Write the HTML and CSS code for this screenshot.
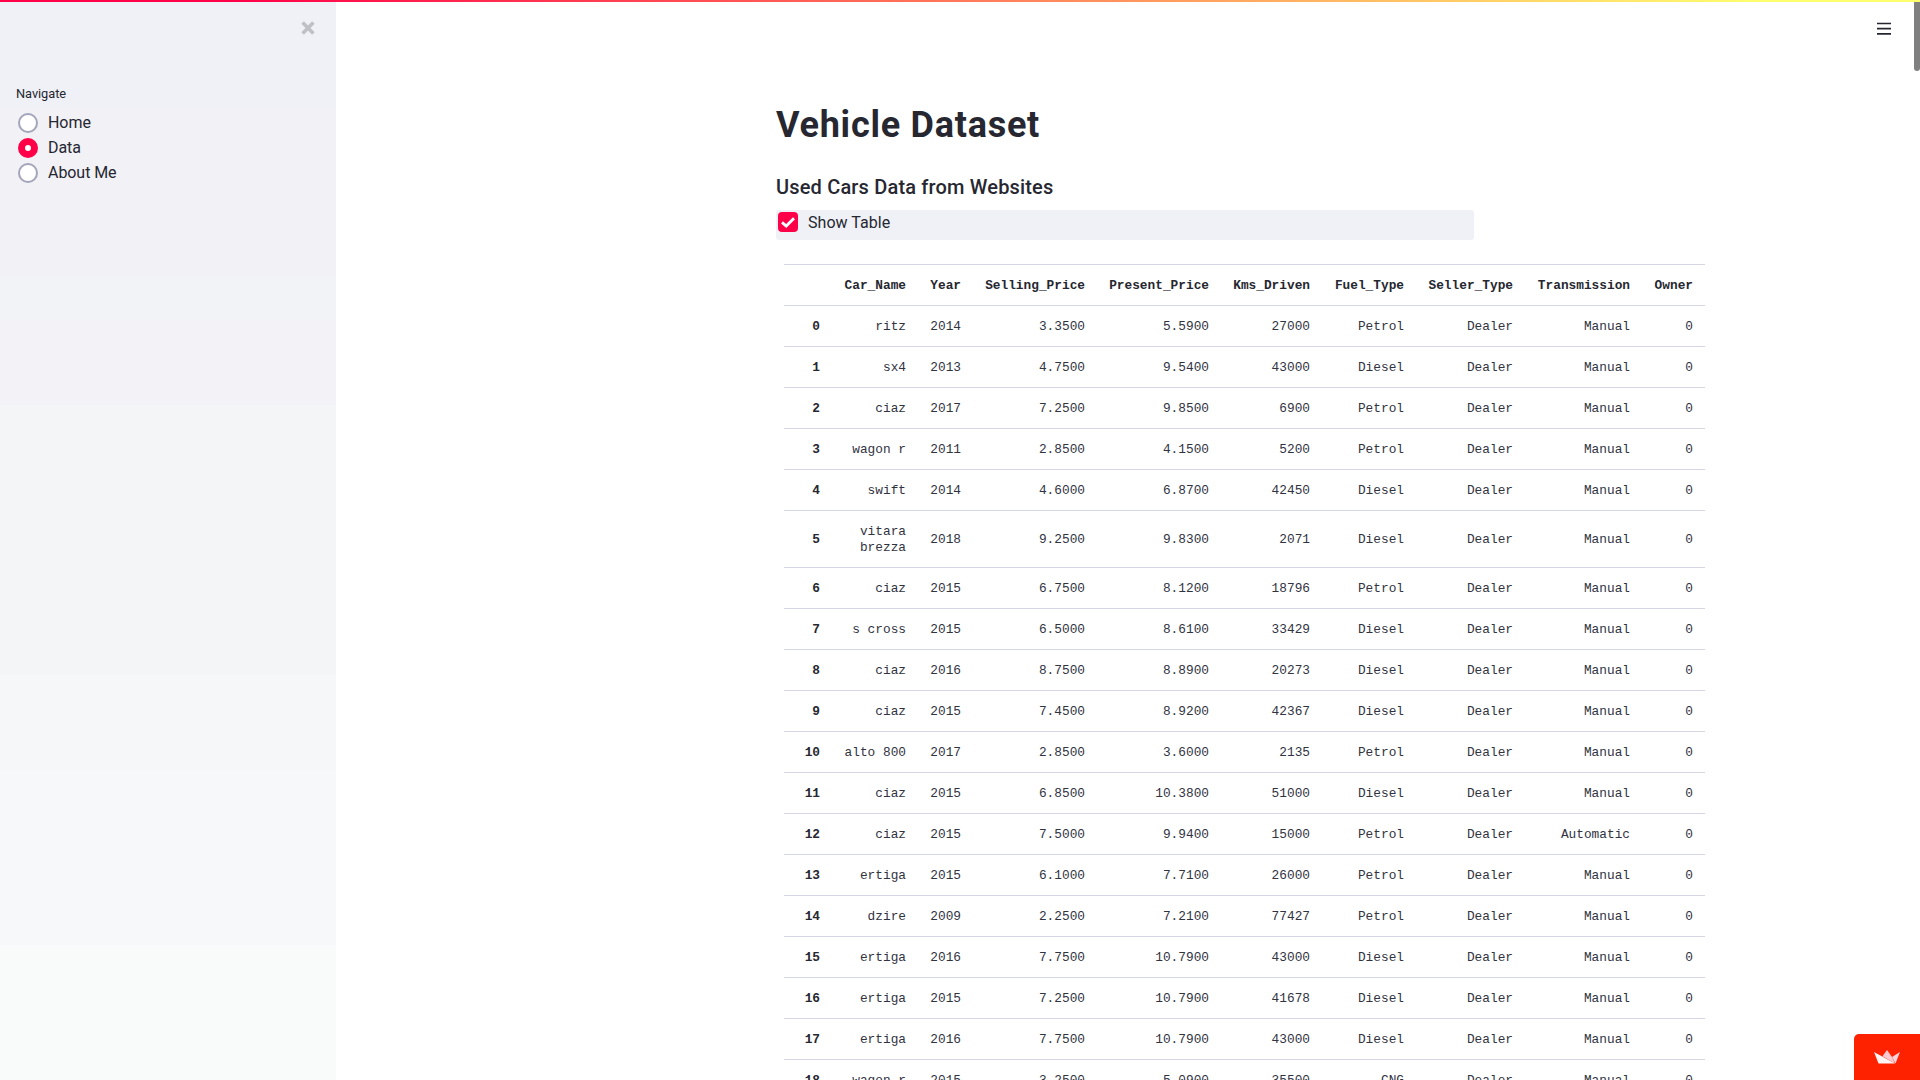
FILE: index.html
```html
<!DOCTYPE html>
<html lang="en">
<head>
<meta charset="utf-8">
<title>Vehicle Dataset</title>
<link rel="stylesheet" href="styles.css">
</head>
<body>
<div class="decoration"></div>
<div class="app">
  <aside class="sidebar">
    <div class="sidebar-top">
      <svg class="close" viewBox="0 0 14 14"><path d="M1.6 1.6 12.4 12.4M12.4 1.6 1.6 12.4"/></svg>
    </div>
    <div class="nav">
      <div class="nav-label">Navigate</div>
      <div class="option"><span class="radio"></span><span class="option-text">Home</span></div>
      <div class="option"><span class="radio selected"></span><span class="option-text">Data</span></div>
      <div class="option"><span class="radio"></span><span class="option-text">About Me</span></div>
    </div>
  </aside>
  <main class="main">
    <div class="block">
      <h1>Vehicle Dataset</h1>
      <h3>Used Cars Data from Websites</h3>
      <div class="checkbox"><span class="box"><svg viewBox="0 0 20 20"><path d="M4 10.4 8.2 14.1 16 6.2"/></svg></span><span class="check-text">Show Table</span></div>
      <table class="table">
        <colgroup><col class="c0"><col class="c1"><col class="c2"><col class="c3"><col class="c4"><col class="c5"><col class="c6"><col class="c7"><col class="c8"><col class="c9"></colgroup>
        <thead><tr><th></th><th>Car_Name</th><th>Year</th><th>Selling_Price</th><th>Present_Price</th><th>Kms_Driven</th><th>Fuel_Type</th><th>Seller_Type</th><th>Transmission</th><th>Owner</th></tr></thead>
        <tbody id="rows"></tbody>
      </table>
    </div>
  </main>
</div>
<svg class="menu" viewBox="0 0 14 13"><path d="M0 1.5H14M0 6.7H14M0 11.8H14"/></svg>
<div class="scrollbar"></div>
<div class="badge"><svg viewBox="0 0 26 14"><path class="p2" d="M8.5 6.3 13 0 18 7 21 13.5Z"/><path class="p1" d="M0 2 21 13.5H4.5Z"/><path class="p3" d="M26 2 21.5 13.5 18 7Z"/></svg></div>
<script src="table.js"></script>
</body>
</html>
```
FILE: styles.css
```css
* { box-sizing: border-box; }
html, body { margin: 0; height: 100%; overflow: hidden; }
body { background: #fff; color: #262730; font-family: Roboto, "Noto Sans", sans-serif; font-size: 16px; }
.decoration { position: fixed; top: 0; left: 0; right: 0; height: 2px; z-index: 5; background: linear-gradient(90deg, #ff0048 0%, #ff0048 12%, #ffff6e 92%, #ffff6e 100%); }
.app { display: flex; height: 1080px; overflow: hidden; }
.sidebar {
  flex: none; width: 336px; height: 1080px; padding: 0 16px;
  background: linear-gradient(180deg, #f0f1f6 0 108px, #f1f1f6 108px 275px, #f1f3f6 275px 320px, #f3f2f7 320px 405px, #f4f5f7 405px 675px, #f6f7f9 675px 770px, #f7f8f9 770px 945px, #f9fafa 945px);
}
.sidebar-top { height: 85px; display: flex; justify-content: flex-end; padding: 21px 5px 0 0; }
.close { width: 14px; height: 14px; fill: none; stroke: #bfc0c5; stroke-width: 3.6; }
.nav-label { font-size: 12.8px; line-height: 17px; height: 25px; letter-spacing: -0.05px; }
.option { display: flex; align-items: center; height: 25px; padding-left: 2px; gap: 10px; }
.radio { flex: none; width: 20px; height: 20px; border-radius: 50%; border: 2px solid #a3a5bb; background: #fff; }
.radio.selected { border: 7px solid #ff0048; }
.option-text, .check-text { line-height: 24px; letter-spacing: -0.06px; }
.check-text { padding-top: 1px; letter-spacing: 0.05px; }
.main { flex: 1; display: flex; padding-left: 440px; }
.block { width: 698px; padding-top: 99px; }
h1 { margin: 0 0 22px; font-size: 36px; font-weight: 700; line-height: 52px; letter-spacing: 0.75px; white-space: nowrap; }
h3 { margin: 0 0 9px; font-size: 20px; font-weight: 500; line-height: 28px; letter-spacing: 0.17px; white-space: nowrap; }
.checkbox { height: 30px; display: flex; align-items: flex-start; gap: 10px; padding: 0 2px; background: #f0f1f6; border-radius: 3px; }
.box { width: 20px; height: 20px; margin-top: 2px; border-radius: 4px; background: #ff0048; }
.box svg { display: block; width: 20px; height: 20px; fill: none; stroke: #fff; stroke-width: 2.8; }
.table { width: 921px; margin: 24px 0 0 8px; table-layout: fixed; border-collapse: separate; border-spacing: 0; font-family: "Liberation Mono", monospace; font-size: 12.8px; line-height: 16px; }
th, td { border-top: 1px solid #d5d5e4; padding: 13px 12px 11px; text-align: right; vertical-align: middle; color: #31333f; font-weight: 400; }
th { font-weight: 700; color: #262730; }
.c0 { width: 48px; }
.c1 { width: 86px; }
.c2 { width: 55px; }
.c3, .c4 { width: 124px; }
.c5 { width: 101px; }
.c6 { width: 94px; }
.c7 { width: 109px; }
.c8 { width: 117px; }
.c9 { width: 63px; }
.menu { position: fixed; top: 22px; left: 1877px; width: 14px; height: 13px; stroke: #262730; stroke-width: 1.7; }
.scrollbar { position: fixed; top: 0; right: 0; width: 6px; height: 71px; background: #808080; border-radius: 0 0 3px 3px; z-index: 4; }
.badge { position: fixed; right: 0; bottom: 0; width: 66px; height: 46px; display: flex; padding: 16px 0 0 20px; border-radius: 5px 0 0 0; background: #ff2200; }
.badge svg { width: 26px; height: 14px; }
.p1 { fill: #fff5f5; }
.p2 { fill: #ffc9d2; }
.p3 { fill: #ffd3dc; }
```
FILE: table.js
```js
const cars = [
  ["ritz", 2014, "3.3500", "5.5900", 27000, "Petrol"],
  ["sx4", 2013, "4.7500", "9.5400", 43000, "Diesel"],
  ["ciaz", 2017, "7.2500", "9.8500", 6900, "Petrol"],
  ["wagon r", 2011, "2.8500", "4.1500", 5200, "Petrol"],
  ["swift", 2014, "4.6000", "6.8700", 42450, "Diesel"],
  ["vitara brezza", 2018, "9.2500", "9.8300", 2071, "Diesel"],
  ["ciaz", 2015, "6.7500", "8.1200", 18796, "Petrol"],
  ["s cross", 2015, "6.5000", "8.6100", 33429, "Diesel"],
  ["ciaz", 2016, "8.7500", "8.8900", 20273, "Diesel"],
  ["ciaz", 2015, "7.4500", "8.9200", 42367, "Diesel"],
  ["alto 800", 2017, "2.8500", "3.6000", 2135, "Petrol"],
  ["ciaz", 2015, "6.8500", "10.3800", 51000, "Diesel"],
  ["ciaz", 2015, "7.5000", "9.9400", 15000, "Petrol", "Automatic"],
  ["ertiga", 2015, "6.1000", "7.7100", 26000, "Petrol"],
  ["dzire", 2009, "2.2500", "7.2100", 77427, "Petrol"],
  ["ertiga", 2016, "7.7500", "10.7900", 43000, "Diesel"],
  ["ertiga", 2015, "7.2500", "10.7900", 41678, "Diesel"],
  ["ertiga", 2016, "7.7500", "10.7900", 43000, "Diesel"],
  ["wagon r", 2015, "3.2500", "5.0900", 35500, "CNG"]
];
const body = document.getElementById("rows");
cars.forEach((car, i) => {
  const row = body.insertRow();
  const head = document.createElement("th");
  head.textContent = i;
  row.append(head);
  [...car.slice(0, 6), "Dealer", car[6] || "Manual", 0].forEach(v => { row.insertCell().textContent = v; });
});
```
